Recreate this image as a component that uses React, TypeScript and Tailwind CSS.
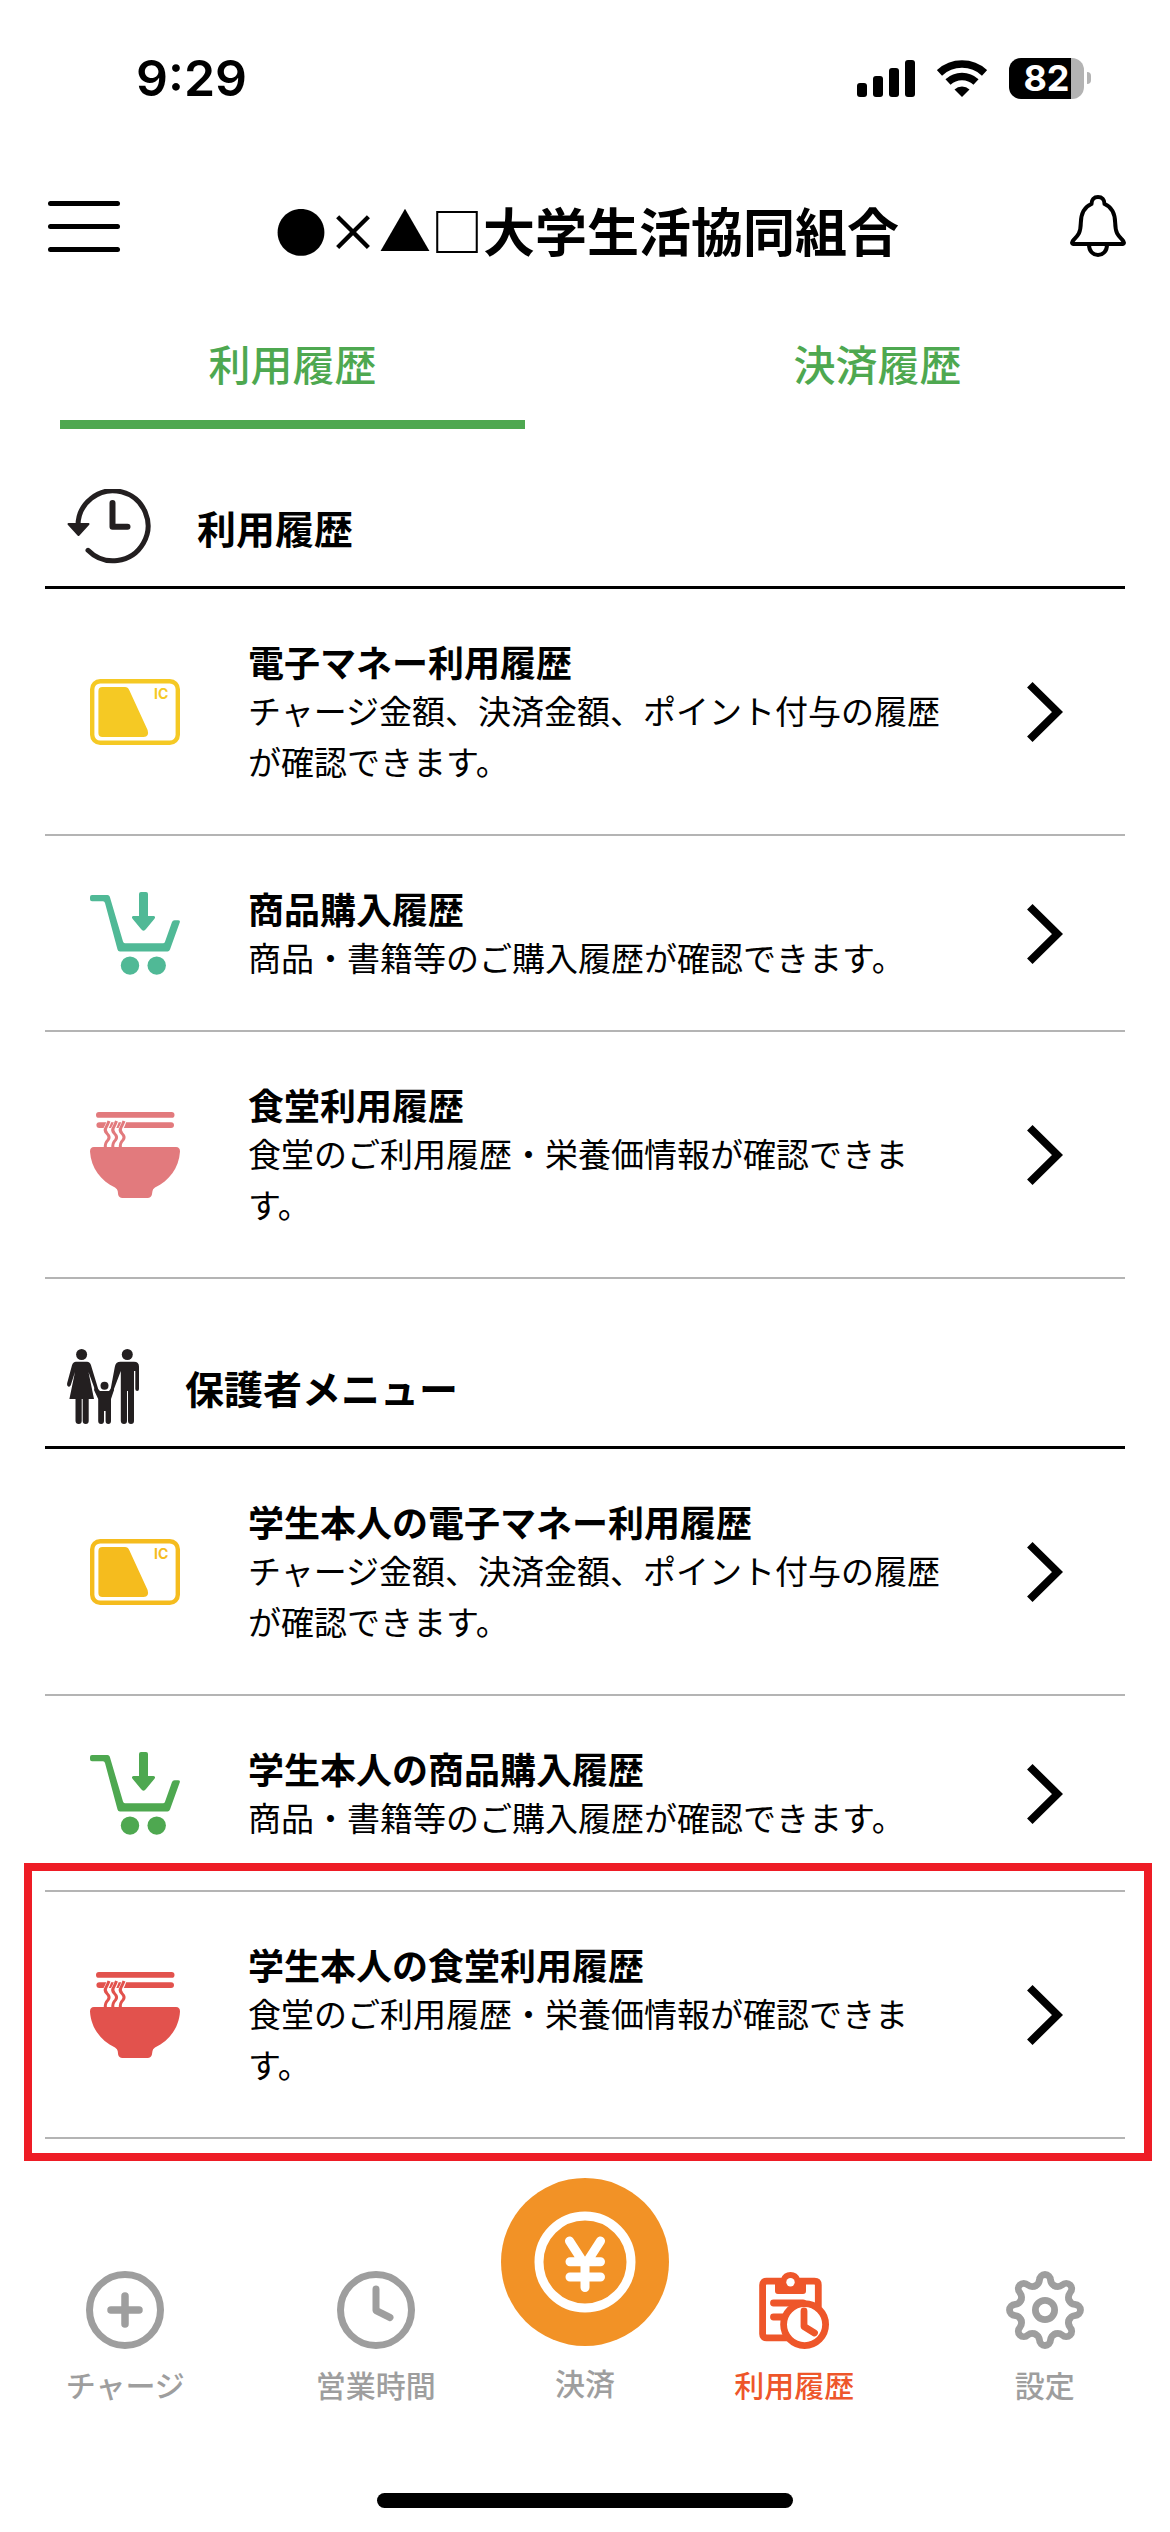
import { useState } from "react";
import type { ReactNode } from "react";

type MenuItem = {
  title: string;
  desc: string;
  icon: ReactNode;
  color: string;
  highlighted?: boolean;
};

const TABS = ["利用履歴", "決済履歴"];

const USAGE_ITEMS: MenuItem[] = [
  { title: "電子マネー利用履歴", desc: "チャージ金額、決済金額、ポイント付与の履歴が確認できます。", icon: <CardIcon />, color: "text-[#f5c924]" },
  { title: "商品購入履歴", desc: "商品・書籍等のご購入履歴が確認できます。", icon: <CartIcon />, color: "text-[#50b996]" },
  { title: "食堂利用履歴", desc: "食堂のご利用履歴・栄養価情報が確認できます。", icon: <BowlIcon />, color: "text-[#e27a7d]" },
];

const PARENT_ITEMS: MenuItem[] = [
  { title: "学生本人の電子マネー利用履歴", desc: "チャージ金額、決済金額、ポイント付与の履歴が確認できます。", icon: <CardIcon />, color: "text-[#f5bc1e]" },
  { title: "学生本人の商品購入履歴", desc: "商品・書籍等のご購入履歴が確認できます。", icon: <CartIcon />, color: "text-[#4ea850]" },
  { title: "学生本人の食堂利用履歴", desc: "食堂のご利用履歴・栄養価情報が確認できます。", icon: <BowlIcon />, color: "text-[#e2524d]", highlighted: true },
];

const GEAR_ANGLES = [0, 45, 90, 135, 180, 225, 270, 315];

function CardIcon() {
  return (
    <svg viewBox="0 0 90 66" className="h-[66px] w-[90px]" fill="currentColor" aria-hidden="true">
      <rect x="2.2" y="2.2" width="85.6" height="61.6" rx="8" fill="none" stroke="currentColor" strokeWidth="4.4" />
      <path d="M12.4 8H35q3 0 4.200 3L57.600 51q2 7-4 7H12.400q-4 0-4-4V12q0-4 4-4z" />
      <text x="64" y="20.300" fontSize="14" fontWeight="700" fontFamily="Inter, sans-serif">IC</text>
    </svg>
  );
}

function CartIcon() {
  return (
    <svg viewBox="0 0 90 83" className="h-[83px] w-[90px]" fill="currentColor" aria-hidden="true">
      <path d="M2 3H17.500q1.800 0 2.300 1.800L33 49.500q.5 1.800 2 1.800H73q1.500 0 2-1.500L82 30q.7-1.800 2.500-1.800H88q2.400 0 1.800 2L80 57.500q-.8 2-2.500 2H30q-2 0-2.500-2L15 11q-.5-1.800-2-1.800H2q-2 0-2-2V5q0-2 2-2z" />
      <path d="M51 0h5q2 0 2 2v22h5.500q2.500.5 1 2.800L56 37q-2.500 3.500-5 0l-8.500-10.200q-1.500-2.300 1-2.800H49V2q0-2 2-2z" />
      <circle cx="40" cy="73.600" r="9.200" />
      <circle cx="66.700" cy="73.600" r="9.200" />
    </svg>
  );
}

function BowlIcon() {
  const noodles = [16, 23.5, 31];
  return (
    <svg viewBox="0 0 90 86" className="h-[86px] w-[90px]" fill="currentColor" aria-hidden="true">
      <rect x="6" y="0" width="78.500" height="5.800" rx="2.900" />
      <rect x="6.400" y="10.200" width="77.600" height="5.800" rx="2.900" />
      {noodles.map((x) => (
        <g key={x} transform={`translate(${x} 0)`} fill="none" strokeLinejoin="round">
          <path d="M3 9.500Q1.500 14-.5 17" stroke="white" strokeWidth="4.600" />
          <path d="M3 9Q1.500 13 0 15.500Q-2 18.500 1 21.500Q4.500 25 2 28Q-1.500 31.500-.5 36" stroke="currentColor" strokeWidth="3" />
        </g>
      ))}
      <path d="M4 35H86q4 0 4 4.500C89 56 79 69 65 75.500Q62.500 77 62.500 79Q62 83.500 61 84.600Q60 86 58 86H32q-2 0-3-1.400Q28 83.500 27.700 79Q27.500 77 25 75.500C11 69 1 56 0 39.500Q0 35 4 35z" />
    </svg>
  );
}

function HistoryIcon() {
  return (
    <svg viewBox="0 0 84 75" className="h-[75px] w-[84px] text-[#231f20]" fill="none" stroke="currentColor" strokeLinecap="round" strokeLinejoin="round" aria-hidden="true">
      <path d="M11 37.500A35 35 0 1 1 21 61.300" strokeWidth="5" />
      <path d="M45.500 14V37.700H60.500" strokeWidth="6" />
      <path d="M1.500 35H21.500L11.500 46z" fill="currentColor" strokeWidth="2" />
    </svg>
  );
}

function FamilyIcon() {
  return (
    <svg viewBox="0 0 72 75" className="h-[75px] w-[72px] text-[#231f20]" fill="currentColor" aria-hidden="true">
      {/* 母 */}
      <circle cx="14.600" cy="5.500" r="5.500" />
      <path d="M9 12.700H20q3 0 4 3.500L31.500 41L29.500 45L21.500 23L27 50H21.700V72q0 3-3 3t-3-3V50h-1V72q0 3-3 3t-3.200-3V50H2.400L8 23L3.800 36q-.8 2.200-2.500 1.500T.2 34L5 16.200q1-3.500 4-3.500z" />
      {/* 父 */}
      <circle cx="60.300" cy="5.500" r="5.500" />
      <path d="M53.500 12.700H67q5 0 5 5V40q0 2-1.800 2T68.300 40V22H67V72q0 3-3 3t-3-3V42h-1V72q0 3-3 3t-3.200-3V22L46 42.500L43.500 41L47.800 18q.7-5.300 5.700-5.300z" />
      {/* 子 */}
      <circle cx="37.500" cy="36.700" r="4" />
      <path d="M28 37L33 42H42L46 37L47 41L44 50V72q0 3-2.700 3T38.600 72V62H37V72q0 3-2.900 3T31.200 72V50L27 41z" />
    </svg>
  );
}

function BellIcon() {
  return (
    <svg viewBox="0 0 56 62" className="h-[62px] w-[56px]" fill="none" stroke="currentColor" strokeWidth="4" strokeLinejoin="round" aria-hidden="true">
      <path d="M28 2C24 2 21.500 4.500 21.500 9C14 12 11 18 10.800 28C10.600 38 8 40.500 4 44.500C1.500 47 1.500 49 3.500 49H52.500C54.500 49 54.500 47 52 44.500C48 40.500 45.400 38 45.200 28C45 18 42 12 34.500 9C34.500 4.500 32 2 28 2z" />
      <path d="M19 50C19 56 23 60 28 60S37 56 37 50" />
    </svg>
  );
}

function ChargeIcon() {
  return (
    <svg viewBox="0 0 78 78" className="size-[78px]" fill="none" stroke="currentColor" strokeLinecap="round" aria-hidden="true">
      <circle cx="39" cy="39" r="35.500" strokeWidth="7" />
      <path d="M39 25V53M25 39H53" strokeWidth="7.500" />
    </svg>
  );
}

function HoursIcon() {
  return (
    <svg viewBox="0 0 78 78" className="size-[78px]" fill="none" stroke="currentColor" strokeWidth="7" strokeLinecap="round" strokeLinejoin="round" aria-hidden="true">
      <circle cx="39" cy="39" r="35.500" />
      <path d="M39 18V39.500L53 46.500" />
    </svg>
  );
}

function YenIcon() {
  return (
    <svg viewBox="0 0 168 168" className="size-[168px]" fill="none" stroke="white" strokeWidth="9" strokeLinecap="round" strokeLinejoin="round" aria-hidden="true">
      <circle cx="84" cy="84" r="84" fill="#f29226" stroke="none" />
      <circle cx="84" cy="84" r="46" />
      <path d="M68.500 63L84 87L99.500 63M84 87V109.500M69 83.700H99.500M69 99H99.500" />
    </svg>
  );
}

function ClipboardIcon() {
  return (
    <svg viewBox="0 0 70 78" className="h-[78px] w-[70px]" fill="none" stroke="currentColor" strokeWidth="6.800" strokeLinecap="round" strokeLinejoin="round" aria-hidden="true">
      <path d="M28 66.800H7.500Q3.600 66.800 3.600 63V14Q3.600 10.200 7.500 10.200H55.500Q59.300 10.200 59.300 14V36" strokeLinecap="butt" />
      <path d="M16 8H22A10 10 0 0 1 41 8H47V20Q47 23 44 23H19Q16 23 16 20z" fill="currentColor" stroke="none" />
      <circle cx="31.500" cy="11.200" r="4.200" fill="white" stroke="none" />
      <path d="M14.500 32H44M14.500 46H26" />
      <circle cx="45.600" cy="53.600" r="21" fill="white" />
      <path d="M45 40V55.500L55.500 62" />
    </svg>
  );
}

function GearIcon() {
  return (
    <svg viewBox="-39 -39 78 78" className="size-[78px]" fill="none" stroke="currentColor" strokeWidth="6.800" strokeLinecap="round" strokeLinejoin="round" aria-hidden="true">
      <circle r="9.600" />
      {GEAR_ANGLES.map((angle) => (
        <path key={angle} transform={`rotate(${angle})`} d="M-9.950-24C-7.200-25.200-6-26.500-5.500-30A5.500 5.500 0 0 1 5.500-30C6-26.500 7.200-25.200 9.950-24" />
      ))}
    </svg>
  );
}

function StatusBar() {
  return (
    <div className="flex h-[156px] items-center justify-between pr-[79px] pl-[136px] font-['Inter',sans-serif]">
      <span className="text-[50px] font-semibold">9:29</span>
      <div className="flex items-center gap-[22px]">
        <svg viewBox="0 0 58 37" className="h-[37px] w-[58px]" aria-hidden="true">
          <rect x="0" y="23" width="10" height="14" rx="3" />
          <rect x="16" y="16" width="10" height="21" rx="3" />
          <rect x="32" y="8" width="10" height="29" rx="3" />
          <rect x="48" y="0" width="10" height="37" rx="3" />
        </svg>
        <svg viewBox="0 0 50 37" className="h-[37px] w-[50px]" fill="none" stroke="black" strokeWidth="7.500" aria-hidden="true">
          <path d="M2.500 12.900A33.200 33.200 0 0 1 47.500 12.900" />
          <path d="M11 22A20.500 20.500 0 0 1 39 22" />
          <path d="M25 37L17.500 29.500A11 11 0 0 1 32.500 29.500z" fill="black" stroke="none" />
        </svg>
        <div className="flex items-center gap-[3px]">
          <div className="flex h-[41px] w-[75px] items-center justify-center rounded-xl bg-[linear-gradient(to_right,#000_83%,#b3b3b3_83%)] text-[36px] leading-none font-bold text-white">
            82
          </div>
          <div className="h-3 w-1 rounded-r-full bg-[#b3b3b3]" />
        </div>
      </div>
    </div>
  );
}

function MenuSection({ icon, heading, items }: { icon: ReactNode; heading: string; items: MenuItem[] }) {
  return (
    <section>
      <div className="flex items-center gap-[46px] border-b-3 border-black px-[22px] pt-[60px] pb-[22px]">
        {icon}
        <h2 className="text-[39px] leading-[58px] font-bold">{heading}</h2>
      </div>
      <ul>
        {items.map((item) => (
          <li key={item.title} className="relative border-b-2 border-[#b4b4b4]">
            <a href="#" className="flex items-center pt-12 pr-[62px] pb-[47px] pl-[45px]">
              <span className={`shrink-0 ${item.color}`}>{item.icon}</span>
              <span className="mr-[66px] ml-[68px] flex-1">
                <span className="block text-[36px] leading-[48px] font-bold">{item.title}</span>
                <span className="block text-[33px] leading-[51px]">{item.desc}</span>
              </span>
              <svg viewBox="0 0 36 60" className="h-[60px] w-[36px] shrink-0" fill="none" stroke="black" strokeWidth="7.800" aria-hidden="true">
                <path d="M2.800 2.800L30.500 30L2.800 57.200" />
              </svg>
            </a>
            {item.highlighted && (
              <div className="pointer-events-none absolute -top-[29px] -right-[27px] -bottom-[24px] -left-[21px] border-8 border-[#ee1c25]" />
            )}
          </li>
        ))}
      </ul>
    </section>
  );
}

function NavLink({ icon, label, active = false }: { icon: ReactNode; label: string; active?: boolean }) {
  return (
    <a href="#" className={`flex flex-1 flex-col items-center gap-[13px] pt-[93px] ${active ? "text-[#ee562a]" : "text-[#9e9e9e]"}`}>
      {icon}
      <span className="text-[30px] leading-[45px] font-medium">{label}</span>
    </a>
  );
}

export default function App() {
  const [tab, setTab] = useState(0);

  return (
    <div lang="ja" className="flex min-h-screen flex-col bg-white font-['Noto_Sans_CJK_JP',sans-serif] text-black">
      <StatusBar />

      <header className="grid h-[140px] grid-cols-[1fr_auto_1fr] items-center pr-[44px] pl-12">
        <button type="button" aria-label="メニュー" className="flex w-[72px] flex-col gap-[18px]">
          <span className="h-[5px] rounded-full bg-black" />
          <span className="h-[5px] rounded-full bg-black" />
          <span className="h-[5px] rounded-full bg-black" />
        </button>
        <h1 className="pt-2 text-[52px] font-bold">
          <span className="font-medium">●×▲□</span>大学生活協同組合
        </h1>
        <button type="button" aria-label="お知らせ" className="justify-self-end">
          <BellIcon />
        </button>
      </header>

      <div role="tablist" className="flex">
        {TABS.map((label, i) => (
          <button
            key={label}
            type="button"
            role="tab"
            aria-selected={tab === i}
            onClick={() => setTab(i)}
            className={`mx-[60px] flex-1 border-b-9 pt-[42px] pb-[32px] text-[42px] leading-[50px] font-medium text-[#4ea850] ${tab === i ? "border-[#4ea850]" : "border-transparent"}`}
          >
            {label}
          </button>
        ))}
      </div>

      <main className="flex flex-col gap-[10px] px-[45px]">
        <MenuSection icon={<HistoryIcon />} heading="利用履歴" items={USAGE_ITEMS} />
        <MenuSection icon={<FamilyIcon />} heading="保護者メニュー" items={PARENT_ITEMS} />
      </main>

      <nav className="flex items-start pt-[39px]">
        <NavLink icon={<ChargeIcon />} label="チャージ" />
        <NavLink icon={<HoursIcon />} label="営業時間" />
        <a href="#" className="flex flex-col items-center gap-[14px] text-[#9e9e9e]">
          <YenIcon />
          <span className="text-[30px] leading-[45px] font-medium">決済</span>
        </a>
        <NavLink icon={<ClipboardIcon />} label="利用履歴" active />
        <NavLink icon={<GearIcon />} label="設定" />
      </nav>

      <div className="mt-auto flex justify-center pb-6">
        <div className="h-[15px] w-[416px] rounded-full bg-black" />
      </div>
    </div>
  );
}
